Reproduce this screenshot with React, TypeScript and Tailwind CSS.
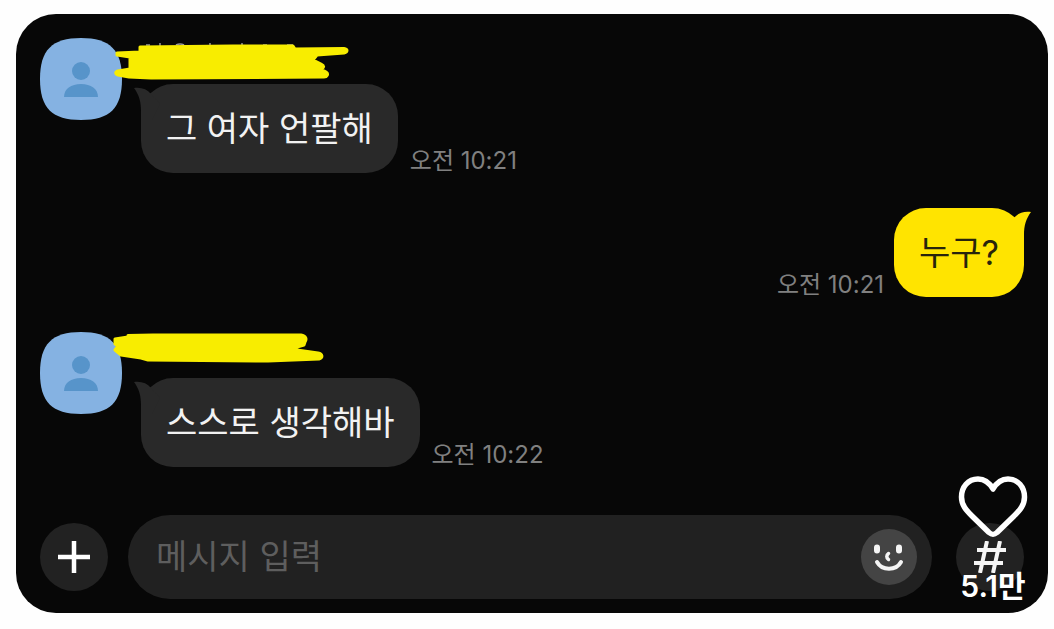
import { useState } from 'react'

type Message = {
    id: number
    text: string
    time: string
    mine?: boolean
    mask?: 'wide' | 'short'
}

const messages: Message[] = [
    { id: 1, text: '그 여자 언팔해', time: '오전 10:21', mask: 'wide' },
    { id: 2, text: '누구?', time: '오전 10:21', mine: true },
    { id: 3, text: '스스로 생각해바', time: '오전 10:22', mask: 'short' },
]

function Avatar() {
    return (
        <svg viewBox="0 0 82 82" className="size-[82px] shrink-0" aria-hidden="true">
            <path d="M0 41C0 12 12 0 41 0s41 12 41 41-12 41-41 41S0 70 0 41Z" fill="#85b2e2" />
            <circle cx="41" cy="33" r="9" fill="#5794ca" />
            <path d="M24 59C24 51 31 46 41 46s17 5 17 13Z" fill="#5794ca" />
        </svg>
    )
}

// Marker strokes that hide the sender's name
function NameMask({ kind }: { kind: 'wide' | 'short' }) {
    if (kind === 'wide') {
        return (
            <svg viewBox="0 0 240 46" className="absolute left-[73px] top-0 h-[46px] w-[240px]" aria-hidden="true">
                <path d="M33 7h4M47 5v3M63 7q4-2 8 0M97 5v3M129 5v3M150 7h4M174 7h6" stroke="#999" strokeWidth="1.5" fill="none" />
                <path
                    d="M4 15L27 14V9L120 8L180 8L182 11L231 10.500C235 11 235 14 231 15L204 17L200 22L208 26C212 28 211 30 208 31L213 34C216 36 214 39 211 39L38 40L16 39L5 37C2 36 2 34 5 33L17 31V19L4 17Z"
                    fill="#f8ed00"
                    stroke="#f8ed00"
                    strokeWidth="3"
                    strokeLinejoin="round"
                />
            </svg>
        )
    }
    return (
        <svg viewBox="0 0 240 46" className="absolute left-[73px] top-0 h-[46px] w-[240px]" aria-hidden="true">
            <path
                d="M2 7L15 5V3.500L40 3L188 3C193 4 194 7 192 10L191 13L184 15V18L205 21C210 22 210 26 206 27L155 29L35 28L28 26L8 23L2 18L5 14L2 12Z"
                fill="#f8ed00"
                stroke="#f8ed00"
                strokeWidth="3"
                strokeLinejoin="round"
            />
        </svg>
    )
}

function Tail({ mine }: { mine?: boolean }) {
    return (
        <svg
            viewBox="0 0 30 40"
            className={`absolute top-0 h-10 w-[30px] ${mine ? '-right-[7px] -scale-x-100 text-[#ffe400]' : '-left-[7px] text-[#292929]'}`}
            aria-hidden="true"
        >
            <path d="M0 4C7 3 13 5 17 10L26 20L18 36H7V27C7 17 5 11 0 4Z" fill="currentColor" />
        </svg>
    )
}

function Bubble({ message }: { message: Message }) {
    const { text, time, mine } = message

    return (
        <div className={`flex items-end ${mine ? 'flex-row-reverse gap-[10px]' : 'gap-3'}`}>
            <div className={`relative rounded-[32px] px-[25px] py-6 ${mine ? 'bg-[#ffe400] text-[#28240c]' : 'bg-[#292929] text-[#f2f2f2]'}`}>
                <Tail mine={mine} />
                <p className="relative whitespace-nowrap text-[34px] leading-[41px]">{text}</p>
            </div>
            <time className="whitespace-nowrap text-[24px] leading-6 text-[#808080]">{time}</time>
        </div>
    )
}

function MessageRow({ message }: { message: Message }) {
    if (message.mine) {
        return (
            <li className="flex justify-end">
                <Bubble message={message} />
            </li>
        )
    }

    return (
        <li className="relative flex items-start gap-[19px]">
            <Avatar />
            <div className="pt-[46px]">
                <Bubble message={message} />
            </div>
            {message.mask && <NameMask kind={message.mask} />}
        </li>
    )
}

export default function App() {
    const [draft, setDraft] = useState('')
    const [liked, setLiked] = useState(false)

    return (
        <div className="min-h-screen bg-[#fefefe] pb-4 pl-4 pr-[6px] pt-[14px] font-['Inter','Noto_Sans_CJK_KR',sans-serif]">
            <main className="relative rounded-[40px] bg-[#070707] px-6 pb-[14px] pt-6">
                <ul className="flex flex-col gap-[35px]">
                    {messages.map((message) => (
                        <MessageRow key={message.id} message={message} />
                    ))}
                </ul>

                <form className="mt-12 flex items-center" onSubmit={(e) => e.preventDefault()}>
                    <button type="button" aria-label="추가" className="flex size-[68px] shrink-0 items-center justify-center rounded-full bg-[#222]">
                        <svg viewBox="0 0 32 32" className="size-8" stroke="#fff" strokeWidth="4.5" aria-hidden="true">
                            <path d="M16 0v32M0 16h32" />
                        </svg>
                    </button>

                    <div className="ml-5 mr-6 flex h-[84px] min-w-0 flex-1 items-center rounded-full bg-[#212121] pl-7 pr-[15px]">
                        <input
                            type="text"
                            aria-label="메시지 입력"
                            placeholder="메시지 입력"
                            value={draft}
                            onChange={(e) => setDraft(e.target.value)}
                            className="min-w-0 flex-1 bg-transparent text-[34px] leading-10 text-[#f2f2f2] outline-none placeholder:text-[#5e5e5e]"
                        />
                        <button type="button" aria-label="이모티콘" className="size-14 shrink-0 rounded-full bg-[#444]">
                            <svg viewBox="0 0 56 56" className="size-14" fill="none" stroke="#f5f5f5" strokeLinecap="round" aria-hidden="true">
                                <path d="M16 18.500v3M38 18.500v3" strokeWidth="6" />
                                <path d="M27.500 24.500a3.500 3.500 0 0 0 0 6" strokeWidth="3.500" />
                                <path d="M16 33c5 9 19 9 24 0" strokeWidth="4" />
                            </svg>
                        </button>
                    </div>

                    <button type="button" aria-label="샵 검색" className="flex size-[68px] shrink-0 items-center justify-center rounded-full bg-[#222]">
                        <svg viewBox="0 0 32 32" className="size-8" fill="none" stroke="#f5f5f5" strokeWidth="4" aria-hidden="true">
                            <path d="M13 0L6 32M26 0L19 32M3 9h29M0 22h29" />
                        </svg>
                    </button>
                </form>

                {/* Like counter floats over the chat */}
                <button
                    type="button"
                    aria-pressed={liked}
                    onClick={() => setLiked(!liked)}
                    className="absolute bottom-[9px] right-5 flex flex-col items-center gap-[30px] text-white"
                >
                    <svg viewBox="0 0 70 62" className="h-[62px] w-[70px]" fill={liked ? '#ff3040' : 'none'} aria-hidden="true">
                        <path
                            d="M35 13C31 6 26 3 20 3C10 3 3.500 11 3.500 21C3.500 29 8 34 14 40L31 56.500C34 59 36 59 39 56.500L56 40C62 34 66.500 29 66.500 21C66.500 11 60 3 50 3C44 3 39 6 35 13Z"
                            stroke="#fff"
                            strokeWidth="5.5"
                            strokeLinejoin="round"
                        />
                    </svg>
                    <span className="text-[30px] font-semibold leading-9">5.1만</span>
                </button>
            </main>
        </div>
    )
}
